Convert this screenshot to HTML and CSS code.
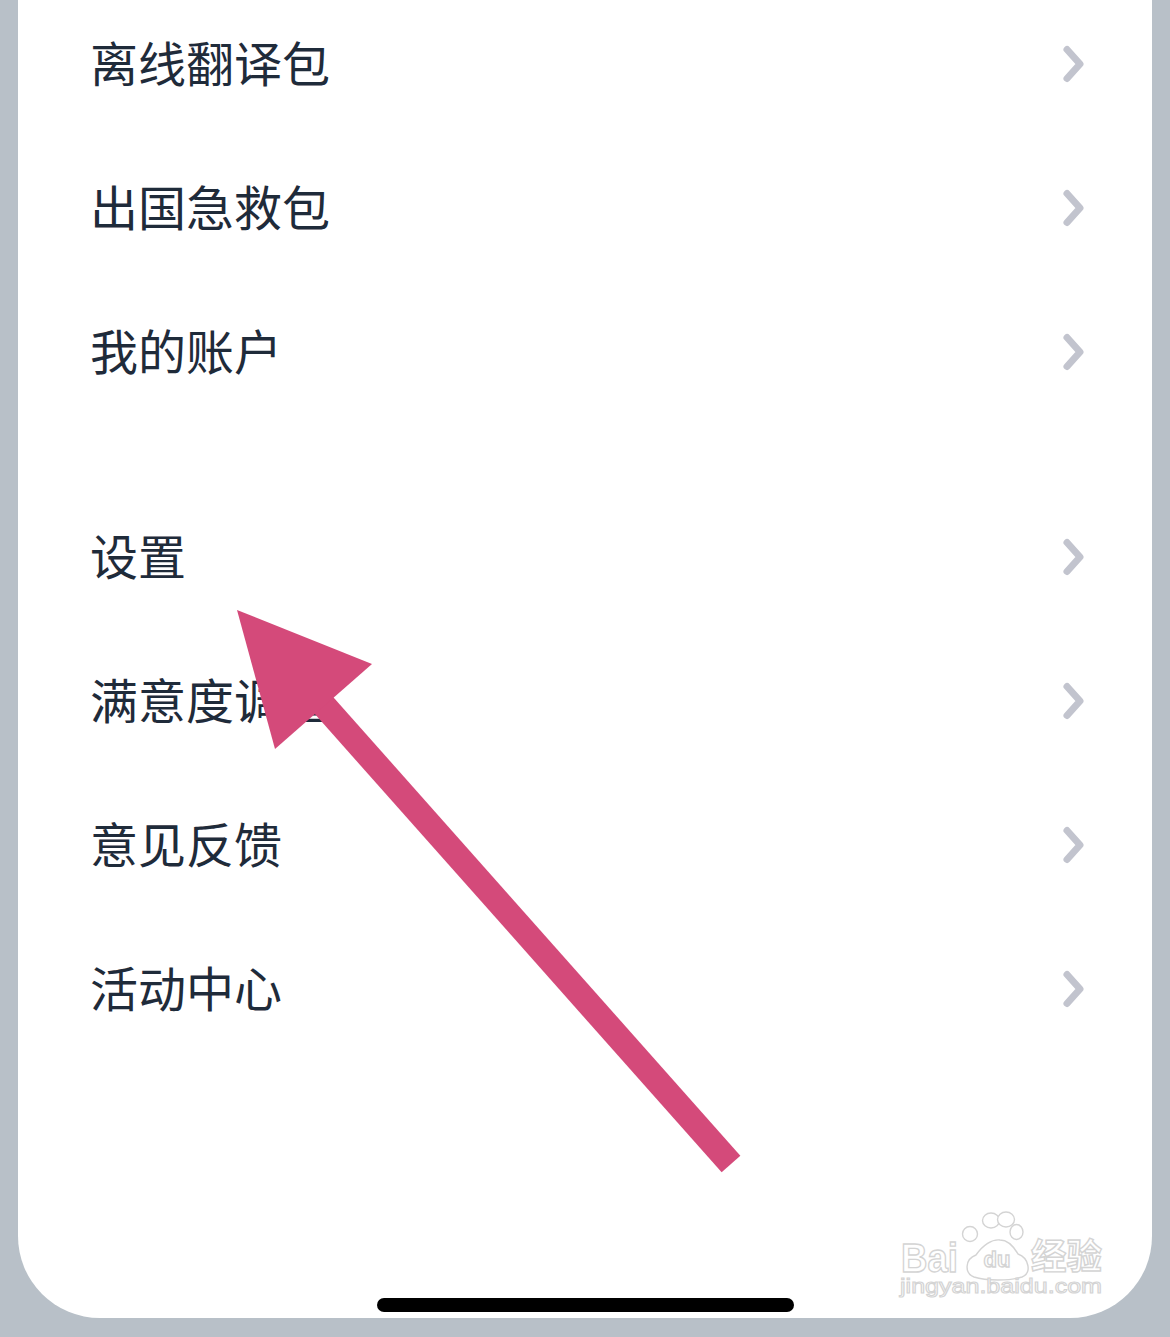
FILE: index.html
```html
<!DOCTYPE html>
<html lang="zh-CN">
  <head>
    <meta charset="UTF-8" />
    <meta name="viewport" content="width=device-width, initial-scale=1.0" />
    <title>我的</title>
    <link rel="stylesheet" href="styles.css">
  </head>
  <body>
    <div class="panel">
      <ul class="group">
        <li class="row"><span>离线翻译包</span><svg class="chev" viewBox="0 0 24 40"><polyline points="5,5.5 18,20 5,34.5" /></svg></li>
        <li class="row"><span>出国急救包</span><svg class="chev" viewBox="0 0 24 40"><polyline points="5,5.5 18,20 5,34.5" /></svg></li>
        <li class="row"><span>我的账户</span><svg class="chev" viewBox="0 0 24 40"><polyline points="5,5.5 18,20 5,34.5" /></svg></li>
      </ul>
      <ul class="group group-second">
        <li class="row"><span>设置</span><svg class="chev" viewBox="0 0 24 40"><polyline points="5,5.5 18,20 5,34.5" /></svg></li>
        <li class="row"><span>满意度调查</span><svg class="chev" viewBox="0 0 24 40"><polyline points="5,5.5 18,20 5,34.5" /></svg></li>
        <li class="row"><span>意见反馈</span><svg class="chev" viewBox="0 0 24 40"><polyline points="5,5.5 18,20 5,34.5" /></svg></li>
        <li class="row"><span>活动中心</span><svg class="chev" viewBox="0 0 24 40"><polyline points="5,5.5 18,20 5,34.5" /></svg></li>
      </ul>
      <div class="home-bar"></div>
    </div>

    <!-- baidu jingyan watermark -->
    <svg class="watermark" viewBox="0 0 220 115">
      <text class="wm-bai" x="11" y="72" textLength="57" lengthAdjust="spacingAndGlyphs">Bai</text>
      <ellipse cx="80" cy="34" rx="7.5" ry="7.5" />
      <ellipse cx="101" cy="20.5" rx="8.5" ry="7.5" />
      <ellipse cx="116" cy="19.5" rx="8.5" ry="7.5" />
      <ellipse cx="126.5" cy="32" rx="6.5" ry="7.5" />
      <path d="M84 77 C74 73 75 59 86 55 C93 45 102 39 110 40 C118 40 124 47 128 54 C139 58 142 73 132 77 C120 81 96 81 84 77 Z" />
      <text class="wm-du" x="107" y="67" text-anchor="middle">du</text>
      <text class="wm-jy" x="141" y="69" textLength="71" lengthAdjust="spacingAndGlyphs">经验</text>
      <text class="wm-url" x="10" y="93" textLength="202" lengthAdjust="spacingAndGlyphs">jingyan.baidu.com</text>
    </svg>

    <svg class="arrow" viewBox="0 0 1170 1337">
      <line x1="312" y1="692" x2="731" y2="1164" />
      <polygon points="237,610 372,664 275,749" />
    </svg>
  </body>
</html>
```

FILE: styles.css
```css
* {
  margin: 0;
  padding: 0;
  box-sizing: border-box;
}
html,
body {
  width: 100%;
  height: 100%;
  background: #b8c0c8;
  font-family: "Noto Sans CJK SC", "Noto Sans", sans-serif;
  overflow: hidden;
}
.panel {
  position: relative;
  width: 1134px;
  height: 1318px;
  margin: 0 18px;
  background: #fff;
  border-radius: 0 0 82px 82px;
  padding-top: 1px;
}
.group {
  list-style: none;
  margin-top: -9px;
}
.group-second {
  margin-top: 61px;
}
.row {
  display: flex;
  align-items: center;
  justify-content: space-between;
  height: 144px;
  padding: 0 66px 0 72px;
}
.row span {
  font-size: 48px;
  line-height: 64px;
  padding-bottom: 6px;
  color: #1f2b3a;
}
.chev {
  width: 24px;
  height: 40px;
}
.chev polyline {
  fill: none;
  stroke: #c2c4ce;
  stroke-width: 7;
  stroke-linecap: round;
  stroke-linejoin: round;
}
.home-bar {
  position: absolute;
  left: 359px;
  bottom: 6px;
  width: 417px;
  height: 14px;
  border-radius: 7px;
  background: #000;
}
.watermark {
  position: absolute;
  left: 890px;
  top: 1200px;
  width: 220px;
  height: 115px;
}
.watermark ellipse,
.watermark path,
.watermark text {
  fill: #fff;
  stroke: #d4d4d4;
  stroke-width: 1.4;
}
.wm-bai {
  font-family: "Liberation Sans", sans-serif;
  font-weight: bold;
  font-size: 40px;
}
.wm-du {
  font-family: "Liberation Sans", sans-serif;
  font-weight: bold;
  font-size: 22px;
}
.wm-jy {
  font-family: "Noto Sans CJK SC", sans-serif;
  font-weight: bold;
  font-size: 35px;
}
.wm-url {
  font-family: "Liberation Sans", sans-serif;
  font-size: 21px;
}
.watermark .wm-url {
  stroke-width: 1.1;
}
.arrow {
  position: absolute;
  left: 0;
  top: 0;
  width: 1170px;
  height: 1337px;
}
.arrow line {
  stroke: #d44a7a;
  stroke-width: 25;
}
.arrow polygon {
  fill: #d44a7a;
}
```
